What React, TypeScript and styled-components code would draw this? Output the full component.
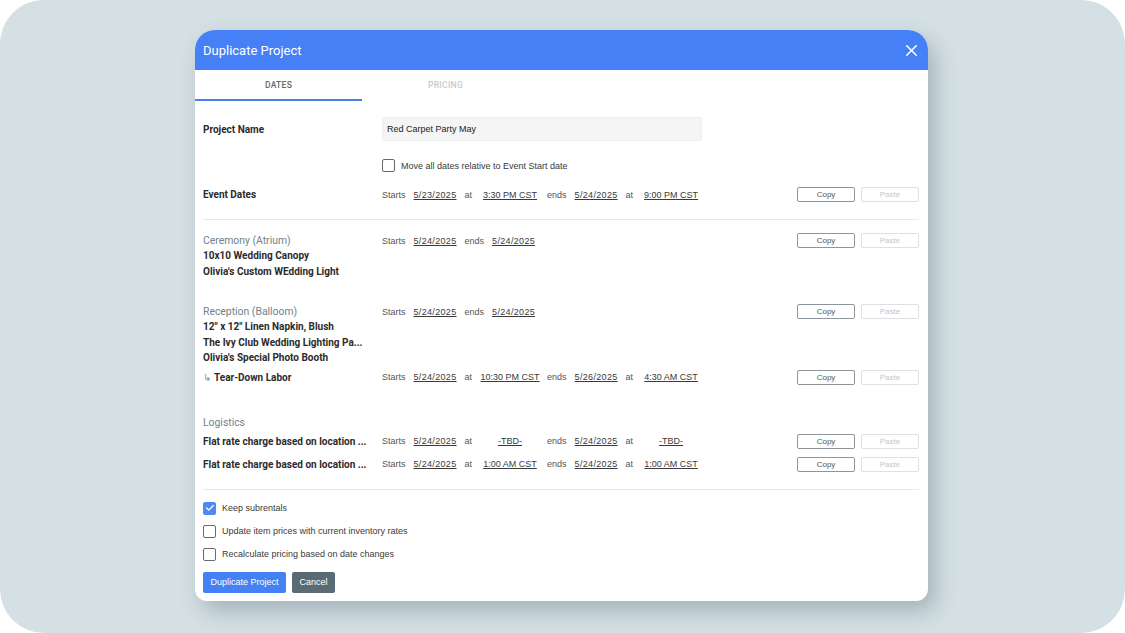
import React from 'react';
import styled, { createGlobalStyle } from 'styled-components';
import { X, Check } from 'lucide-react';

const GlobalStyle = createGlobalStyle`
	html, body {
		margin: 0;
		padding: 0;
		background: #ffffff;
	}
	body {
		font-family: 'Liberation Sans', Arial, sans-serif;
		color: #333;
	}
`;

const Backdrop = styled.div`
	width: 1125px;
	height: 633px;
	background: #d5e0e4;
	border-radius: 44px;
	display: flex;
	align-items: flex-start;
	padding: 30px 0 0 195px;
	box-sizing: border-box;
`;

const Modal = styled.div`
	width: 733px;
	background: #ffffff;
	border-radius: 20px 20px 12px 12px;
	overflow: hidden;
	box-shadow: 7px 10px 22px rgba(60, 85, 95, 0.32);
`;

const Header = styled.div`
	height: 40px;
	background: #4580f6;
	display: flex;
	align-items: center;
	justify-content: space-between;
	padding: 0 7px 0 8px;
`;

const Title = styled.div`
	font-family: Roboto, 'Liberation Sans', sans-serif;
	font-size: 13px;
	color: #ffffff;
`;

const CloseButton = styled.button`
	border: 0;
	background: transparent;
	padding: 0;
	color: #ffffff;
	display: flex;
	cursor: pointer;
`;

const TabBar = styled.div`
	display: flex;
	height: 31px;
`;

const Tab = styled.div<{ $active?: boolean }>`
	width: 167px;
	display: flex;
	align-items: center;
	justify-content: center;
	font-family: Roboto, 'Liberation Sans', sans-serif;
	font-size: 8.5px;
	font-weight: 500;
	letter-spacing: 0.3px;
	text-transform: uppercase;
	color: ${(p) => (p.$active ? '#5d6a72' : '#c6cbce')};
	border-bottom: 2px solid ${(p) => (p.$active ? '#4a80e8' : 'transparent')};
	box-sizing: border-box;
`;

const Body = styled.div`
	padding: 16px 9px 8px 8px;
`;

const NameRow = styled.div`
	display: grid;
	grid-template-columns: 179px 320px;
	align-items: center;
	height: 24px;
`;

const BoldLabel = styled.div`
	font-family: Roboto, 'Liberation Sans', sans-serif;
	font-size: 10px;
	font-weight: 700;
	color: #2b2b2b;
	white-space: nowrap;
	overflow: hidden;
	text-overflow: ellipsis;
	max-width: 172px;
`;

const NameInput = styled.input`
	height: 24px;
	box-sizing: border-box;
	border: 1px solid #eeeeee;
	border-radius: 2px;
	background: #f5f5f5;
	padding: 0 4px;
	font-family: 'Liberation Sans', Arial, sans-serif;
	font-size: 9px;
	color: #222;
	outline: none;
`;

const CheckRow = styled.label<{ $indent?: boolean; $mt: number }>`
	display: flex;
	align-items: center;
	gap: 6px;
	height: 13px;
	margin-top: ${(p) => p.$mt}px;
	margin-left: ${(p) => (p.$indent ? 179 : 0)}px;
	font-size: 9px;
	color: #3a3a3a;
`;

const Box = styled.span<{ $checked?: boolean }>`
	width: 13px;
	height: 13px;
	box-sizing: border-box;
	border-radius: 2px;
	border: 1.5px solid ${(p) => (p.$checked ? '#5089f0' : '#6a6a6a')};
	background: ${(p) => (p.$checked ? '#5089f0' : '#fff')};
	display: flex;
	align-items: center;
	justify-content: center;
	color: #fff;
`;

const Row = styled.div<{ $mt: number }>`
	display: grid;
	grid-template-columns: 179px 1fr auto;
	align-items: start;
	margin-top: ${(p) => p.$mt}px;
`;

const LeftCol = styled.div`
	line-height: 15.5px;
`;

const GroupTitle = styled.div<{ $mt?: number }>`
	font-family: Roboto, 'Liberation Sans', sans-serif;
	font-size: 10.4px;
	color: #6f838d;
	line-height: 15px;
	margin-top: ${(p) => p.$mt || 0}px;
`;

const ItemLine = styled(BoldLabel)`
	line-height: 15.5px;
`;

const ChildLabel = styled(BoldLabel)`
	line-height: 15px;
`;

const Arrow = styled.span`
	font-weight: 400;
	color: #8a9399;
	margin-right: 3px;
`;

const Timeline = styled.div`
	display: flex;
	align-items: center;
	height: 15px;
	font-size: 9px;
	white-space: nowrap;
`;

const Word = styled.span<{ $gap?: number }>`
	color: #555;
	margin-right: ${(p) => (p.$gap === undefined ? 8 : p.$gap)}px;
`;

const DateLink = styled.span`
	color: #3a3a3a;
	text-decoration: underline;
	letter-spacing: 0.33px;
	margin-right: 8px;
`;

const TimeLink = styled.span`
	width: 64px;
	text-align: center;
	color: #3a3a3a;
	text-decoration: underline;
	margin-right: 5px;
`;

const Actions = styled.div`
	display: flex;
	gap: 6px;
`;

const SmallButton = styled.button<{ $disabled?: boolean }>`
	width: 58px;
	height: 15px;
	padding: 0;
	box-sizing: border-box;
	background: #fff;
	border: 1px solid ${(p) => (p.$disabled ? '#dde1e4' : '#8d959a')};
	border-radius: 2px;
	font-family: 'Liberation Sans', Arial, sans-serif;
	font-size: 8px;
	color: ${(p) => (p.$disabled ? '#c3c7ca' : '#555')};
`;

const Divider = styled.div`
	height: 1px;
	background: #e7eaec;
	margin-top: 17px;
`;

const Footer = styled.div`
	display: flex;
	gap: 6px;
	margin-top: 11px;
`;

const FooterButton = styled.button<{ $variant: 'primary' | 'secondary' }>`
	height: 21px;
	padding: 0 7.5px;
	border: 0;
	border-radius: 2px;
	background: ${(p) => (p.$variant === 'primary' ? '#4481f5' : '#5a6b75')};
	color: #fff;
	font-family: 'Liberation Sans', Arial, sans-serif;
	font-size: 9px;
`;

type Span = { start: string; startTime?: string; end: string; endTime?: string };

const Dates = ({ start, startTime, end, endTime }: Span) => (
	<Timeline>
		<Word>Starts</Word>
		<DateLink>{start}</DateLink>
		{startTime !== undefined && (
			<>
				<Word $gap={6}>at</Word>
				<TimeLink>{startTime}</TimeLink>
			</>
		)}
		<Word>ends</Word>
		<DateLink>{end}</DateLink>
		{endTime !== undefined && (
			<>
				<Word $gap={6}>at</Word>
				<TimeLink>{endTime}</TimeLink>
			</>
		)}
	</Timeline>
);

const CopyPaste = () => (
	<Actions>
		<SmallButton>Copy</SmallButton>
		<SmallButton $disabled>Paste</SmallButton>
	</Actions>
);

const Checkbox = ({ checked }: { checked?: boolean }) => (
	<Box $checked={checked}>{checked && <Check size={10} strokeWidth={3} />}</Box>
);

const App = () => {
	return (
		<>
			<GlobalStyle />
			<Backdrop>
				<Modal>
					<Header>
						<Title>Duplicate Project</Title>
						<CloseButton>
							<X size={19} strokeWidth={2} />
						</CloseButton>
					</Header>
					<TabBar>
						<Tab $active>Dates</Tab>
						<Tab>Pricing</Tab>
					</TabBar>
					<Body>
						<NameRow>
							<BoldLabel>Project Name</BoldLabel>
							<NameInput defaultValue='Red Carpet Party May' />
						</NameRow>
						<CheckRow $indent $mt={18}>
							<Checkbox />
							Move all dates relative to Event Start date
						</CheckRow>
						<Row $mt={15}>
							<ChildLabel>Event Dates</ChildLabel>
							<Dates start='5/23/2025' startTime='3:30 PM CST' end='5/24/2025' endTime='9:00 PM CST' />
							<CopyPaste />
						</Row>
						<Divider />

						<Row $mt={13}>
							<LeftCol>
								<GroupTitle>Ceremony (Atrium)</GroupTitle>
								<ItemLine>10x10 Wedding Canopy</ItemLine>
								<ItemLine>Olivia's Custom WEdding Light</ItemLine>
							</LeftCol>
							<Dates start='5/24/2025' end='5/24/2025' />
							<CopyPaste />
						</Row>

						<Row $mt={25}>
							<LeftCol>
								<GroupTitle>Reception (Balloom)</GroupTitle>
								<ItemLine>12" x 12" Linen Napkin, Blush</ItemLine>
								<ItemLine>The Ivy Club Wedding Lighting Pa...</ItemLine>
								<ItemLine>Olivia's Special Photo Booth</ItemLine>
							</LeftCol>
							<Dates start='5/24/2025' end='5/24/2025' />
							<CopyPaste />
						</Row>
						<Row $mt={4}>
							<ChildLabel>
								<Arrow>↳</Arrow>Tear-Down Labor
							</ChildLabel>
							<Dates start='5/24/2025' startTime='10:30 PM CST' end='5/26/2025' endTime='4:30 AM CST' />
							<CopyPaste />
						</Row>

						<GroupTitle $mt={30}>Logistics</GroupTitle>
						<Row $mt={4}>
							<ChildLabel>Flat rate charge based on location ...</ChildLabel>
							<Dates start='5/24/2025' startTime='-TBD-' end='5/24/2025' endTime='-TBD-' />
							<CopyPaste />
						</Row>
						<Row $mt={8}>
							<ChildLabel>Flat rate charge based on location ...</ChildLabel>
							<Dates start='5/24/2025' startTime='1:00 AM CST' end='5/24/2025' endTime='1:00 AM CST' />
							<CopyPaste />
						</Row>
						<Divider />

						<CheckRow $mt={12}>
							<Checkbox checked />
							Keep subrentals
						</CheckRow>
						<CheckRow $mt={10}>
							<Checkbox />
							Update item prices with current inventory rates
						</CheckRow>
						<CheckRow $mt={10}>
							<Checkbox />
							Recalculate pricing based on date changes
						</CheckRow>

						<Footer>
							<FooterButton $variant='primary'>Duplicate Project</FooterButton>
							<FooterButton $variant='secondary'>Cancel</FooterButton>
						</Footer>
					</Body>
				</Modal>
			</Backdrop>
		</>
	);
};

export default App;
